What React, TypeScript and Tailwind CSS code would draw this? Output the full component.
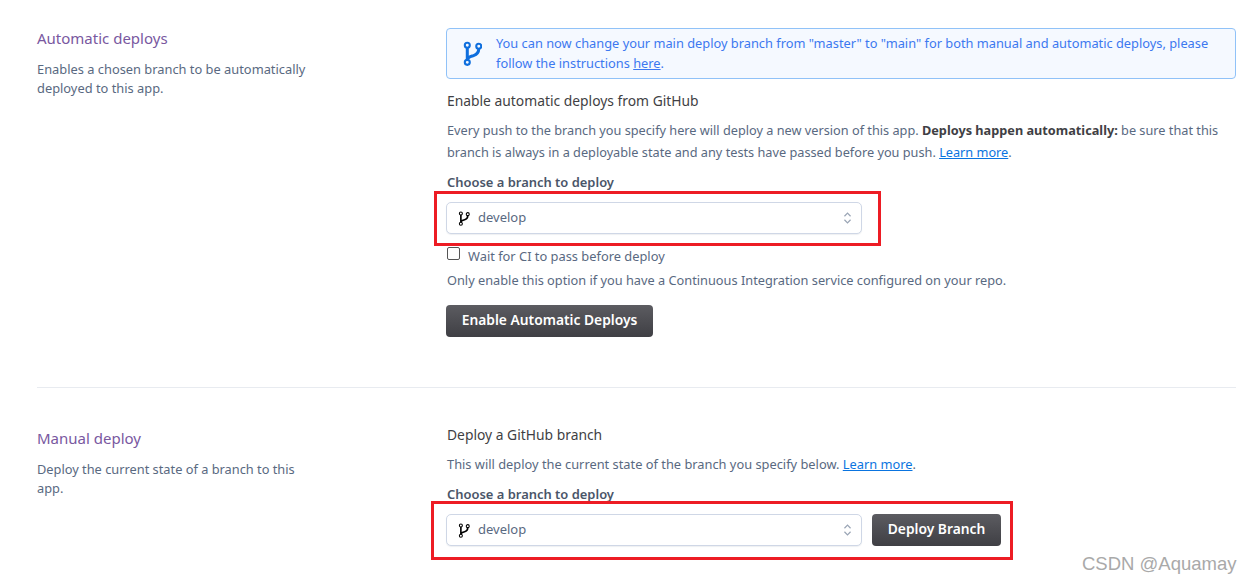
import React from "react";

const font = { fontFamily: '"Noto Sans", sans-serif' };

function Branch({ className, sw = 2 }: { className: string; sw?: number }) {
  return (
    <svg viewBox="0 0 18 24" fill="none" stroke="currentColor" strokeWidth={sw} className={className}>
      <circle cx="4" cy="4" r="2.4" />
      <circle cx="4" cy="20.5" r="2.4" />
      <circle cx="15" cy="5" r="2.4" />
      <path d="M4 6.5V18M15 7.5c0 4-2 5.5-5 6.5-3 1-6 1.5-6 4" strokeWidth={sw + 0.9} />
    </svg>
  );
}

function Select() {
  return (
    <div className="w-[416px] h-[32px] shrink-0 flex items-center bg-white border border-[#cfd7e6] rounded-[5px] pl-[11px] pr-[9px] shadow-[0_1px_1px_rgba(89,105,129,0.1)]">
      <Branch className="w-[12px] h-[15px] text-black" sw={1.7} />
      <span className="ml-[8px] mb-[1px] text-[13px] text-[#596981]">develop</span>
      <svg viewBox="0 0 10 16" className="ml-auto w-[9px] h-[14px] text-[#9aa5b5]" fill="none" stroke="currentColor" strokeWidth="1.4">
        <path d="M1.5 6 5 2.5 8.5 6M1.5 10 5 13.5 8.5 10" />
      </svg>
    </div>
  );
}

export default function App() {
  return (
    <div style={font} className="relative w-[1249px] h-[584px] overflow-hidden bg-white pl-[37px] pr-[13px] pt-[28px] text-[#596981]">
      <section className="flex h-[360px] border-b border-[#e8ebf0]">
        <div className="w-[409px] shrink-0">
          <h2 className="-mt-[1px] text-[15px] leading-[22px] text-[#79589f]">Automatic deploys</h2>
          <p className="mt-[11px] w-[290px] text-[12.85px] leading-[19px]">Enables a chosen branch to be automatically deployed to this app.</p>
        </div>
        <div className="flex-1 min-w-0">
          <div className="h-[51px] flex items-center border border-[#90c2f8] rounded-[4px] bg-[#f5f9ff] text-[#3c78f0] pl-[16px] pr-[8px] pb-[2px]">
            <Branch className="w-[19px] h-[25px] shrink-0 text-[#0f6fde] mt-[2px]" />
            <p className="ml-[14px] text-[12.82px] leading-[20px]">
              You can now change your main deploy branch from "master" to "main" for both manual and automatic deploys, please follow the instructions <a className="underline">here</a>.
            </p>
          </div>
          <h3 className="mt-[12px] pl-[1px] text-[13.85px] leading-[20px] text-[#3f3f44]">Enable automatic deploys from GitHub</h3>
          <p className="mt-[8px] pl-[1px] text-[12.72px] leading-[22px]">
            Every push to the branch you specify here will deploy a new version of this app. <b className="text-[#3f3f44]">Deploys happen automatically:</b> be sure that this branch is always in a deployable state and any tests have passed before you push. <a className="text-[#0a74e0] underline">Learn more</a>.
          </p>
          <label className="block mt-[10px] pl-[1px] text-[12.95px] leading-[18px] font-semibold text-[#4a5568]">Choose a branch to deploy</label>
          <div className="mt-[11px]"><Select /></div>
          <div className="mt-[14px] flex items-center h-[16px] pl-[1px]">
            <span className="w-[13px] h-[13px] mt-[-5px] border border-[#555] rounded-[2px] bg-white" />
            <span className="ml-[8px] mt-[2px] text-[12.85px]">Wait for CI to pass before deploy</span>
          </div>
          <p className="mt-[7px] pl-[1px] text-[12.77px] leading-[18px]">Only enable this option if you have a Continuous Integration service configured on your repo.</p>
          <button className="mt-[16px] block w-[207px] h-[32px] pb-[1px] rounded-[4px] bg-gradient-to-b from-[#5c5c61] to-[#3f3f44] text-white text-[13.8px] font-semibold">Enable Automatic Deploys</button>
        </div>
      </section>
      <section className="flex pt-[39px]">
        <div className="w-[409px] shrink-0">
          <h2 className="text-[15px] leading-[22px] text-[#79589f]">Manual deploy</h2>
          <p className="mt-[11px] w-[270px] text-[12.8px] leading-[19px]">Deploy the current state of a branch to this app.</p>
        </div>
        <div className="flex-1 min-w-0">
          <h3 className="-mt-[2px] pl-[1px] text-[13.85px] leading-[20px] text-[#3f3f44]">Deploy a GitHub branch</h3>
          <p className="mt-[9px] pl-[1px] text-[12.83px] leading-[20px]">This will deploy the current state of the branch you specify below. <a className="text-[#0a74e0] underline">Learn more</a>.</p>
          <label className="block mt-[11px] pl-[1px] text-[12.95px] leading-[18px] font-semibold text-[#4a5568]">Choose a branch to deploy</label>
          <div className="mt-[11px] flex items-center gap-[10px]">
            <Select />
            <button className="w-[129px] h-[32px] pb-[1px] rounded-[4px] bg-gradient-to-b from-[#5c5c61] to-[#3f3f44] text-white text-[13.8px] font-semibold">Deploy Branch</button>
          </div>
        </div>
      </section>
      <div className="absolute left-[434px] top-[191px] w-[447px] h-[55px] border-[3px] border-[#ed1c24]" />
      <div className="absolute left-[431px] top-[501px] w-[582px] h-[59px] border-[3px] border-[#ed1c24]" />
      <div className="absolute left-[1082px] top-[553px] text-[18.5px] leading-[22px] text-[#a9a9a9]" style={{ fontFamily: '"Liberation Sans", sans-serif' }}>CSDN @Aquamay</div>
    </div>
  );
}
